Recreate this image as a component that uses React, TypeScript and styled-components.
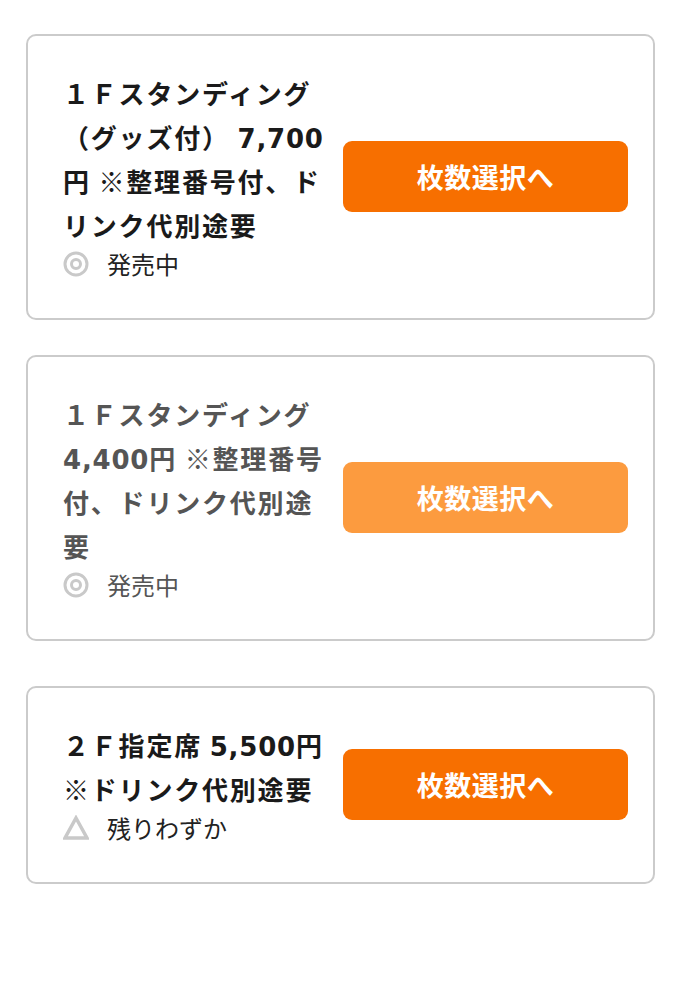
import React, { FC } from "react";
import styled, { createGlobalStyle } from "styled-components";

type SaleStatus = "onSale" | "fewLeft";

interface TicketModel {
  id: string;
  label: string;
  status: SaleStatus;
  muted?: boolean;
}

const tickets: TicketModel[] = [
  { id: "standing-goods", label: "１Ｆスタンディング（グッズ付） 7,700円 ※整理番号付、ドリンク代別途要", status: "onSale" },
  { id: "standing", label: "１Ｆスタンディング4,400円 ※整理番号付、ドリンク代別途要", status: "onSale", muted: true },
  { id: "reserved", label: "２Ｆ指定席 5,500円 ※ドリンク代別途要", status: "fewLeft" },
];

const statusText: Record<SaleStatus, string> = {
  onSale: "発売中",
  fewLeft: "残りわずか",
};

const GlobalStyle = createGlobalStyle`
  body {
    margin: 0;
    background: #fff;
    font-family: "Noto Sans CJK JP", "Noto Sans", sans-serif;
  }
`;

const ListStyle = styled.div`
  padding: 34px 27px 40px 26px;
  display: flex;
  flex-direction: column;
`;

const CardStyle = styled.div<{ $gap: number }>`
  display: flex;
  align-items: center;
  gap: 12px;
  border: 2px solid #cbcbcb;
  border-radius: 10px;
  padding: 35px 25px 37px 35px;
  margin-bottom: ${p => p.$gap}px;
`;

const InfoStyle = styled.div`
  width: 268px;
  flex-shrink: 0;
`;

const TitleStyle = styled.div<{ $muted?: boolean }>`
  font-size: 26px;
  font-weight: 700;
  line-height: 44px;
  letter-spacing: 1.8px;
  color: ${p => (p.$muted ? "#555" : "#1a1a1a")};
`;

// prices use a wider latin face; line-height keeps the row height steady
const PriceStyle = styled.span`
  font-family: "DejaVu Sans", sans-serif;
  letter-spacing: 0.8px;
  line-height: 1;
`;

const StatusRowStyle = styled.div<{ $muted?: boolean }>`
  display: flex;
  align-items: center;
  gap: 18px;
  height: 34px;
  font-size: 24px;
  line-height: 34px;
  color: ${p => (p.$muted ? "#555" : "#222")};
`;

const SelectButton = styled.button<{ $muted?: boolean }>`
  flex: 1;
  height: 71px;
  border: none;
  border-radius: 9px;
  background: ${p => (p.$muted ? "#fc9b3f" : "#f76f00")};
  color: #fff;
  font-family: inherit;
  font-size: 27px;
  font-weight: 700;
  letter-spacing: 0.5px;
  cursor: pointer;
`;

const StatusIcon: FC<{ status: SaleStatus }> = ({ status }) =>
  status === "onSale" ? (
    <svg width="26" height="26" viewBox="0 0 26 26">
      <circle cx="13" cy="13" r="11" fill="none" stroke="#c9c9c9" strokeWidth="3" />
      <circle cx="13" cy="13" r="4.5" fill="none" stroke="#c9c9c9" strokeWidth="3" />
    </svg>
  ) : (
    <svg width="26" height="26" viewBox="0 0 26 26">
      <path d="M13 3 L24 23 L2 23 Z" fill="none" stroke="#c9c9c9" strokeWidth="3.5" strokeLinejoin="miter" />
    </svg>
  );

const renderLabel = (label: string) =>
  label.split(/(\d[\d,]*)/).map((part, i) =>
    i % 2 === 1 ? <PriceStyle key={i}>{part}</PriceStyle> : part
  );

const TicketCard: FC<{ ticket: TicketModel; gap: number }> = ({ ticket, gap }) => (
  <CardStyle $gap={gap}>
    <InfoStyle>
      <TitleStyle $muted={ticket.muted}>{renderLabel(ticket.label)}</TitleStyle>
      <StatusRowStyle $muted={ticket.muted}>
        <StatusIcon status={ticket.status} />
        <span>{statusText[ticket.status]}</span>
      </StatusRowStyle>
    </InfoStyle>
    <SelectButton $muted={ticket.muted}>枚数選択へ</SelectButton>
  </CardStyle>
);

const App: FC = () => (
  <>
    <GlobalStyle />
    <ListStyle>
      {tickets.map((ticket, i) => (
        <TicketCard key={ticket.id} ticket={ticket} gap={i === 0 ? 35 : 45} />
      ))}
    </ListStyle>
  </>
);

export default App;
